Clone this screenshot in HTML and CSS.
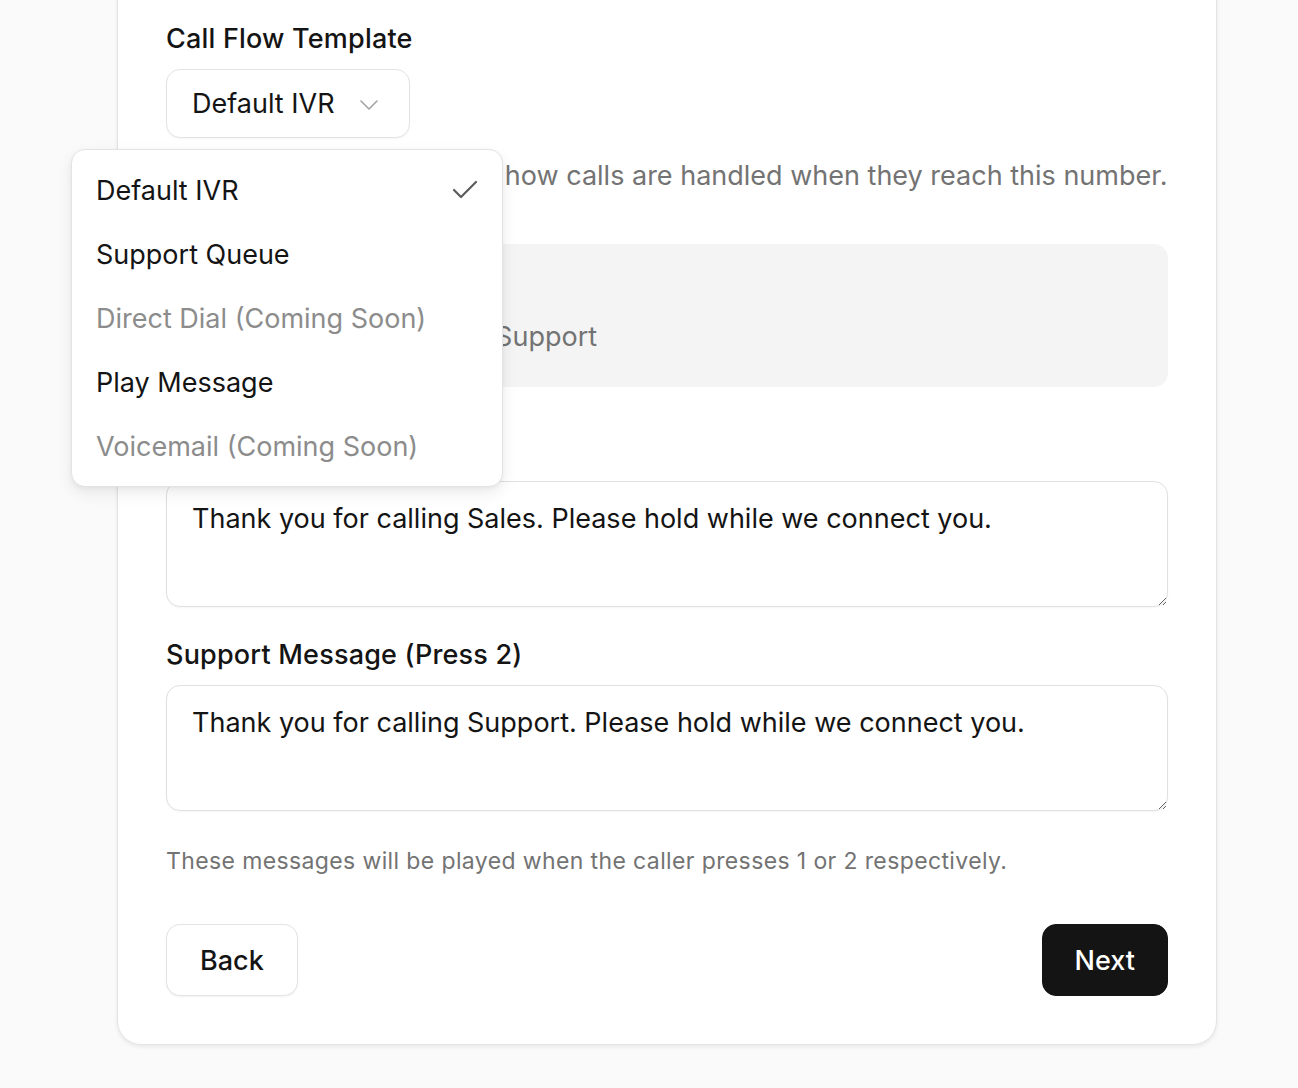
FILE: index.html
```html
<!DOCTYPE html>
<html lang="en">
<head>
<meta charset="utf-8">
<title>Call Flow</title>
<link rel="stylesheet" href="styles.css">
</head>
<body>
<div class="page">
  <div class="card">
    <div class="field">
      <div class="label">Call Flow Template</div>
      <div class="select-wrap">
        <button class="select" type="button">
          <span>Default IVR</span>
          <svg class="chev" width="18" height="10" viewBox="0 0 18 10"><polyline points="1,1 9,9 17,1" fill="none" stroke="#a3a3a3" stroke-width="1.6" stroke-linecap="round" stroke-linejoin="round"/></svg>
        </button>
        <div class="menu">
          <div class="item">Default IVR
            <svg class="check" width="26" height="20" viewBox="0 0 26 20"><polyline points="2,10 9,17 24,2" fill="none" stroke="#5c5c5c" stroke-width="2.2" stroke-linecap="round" stroke-linejoin="round"/></svg>
          </div>
          <div class="item">Support Queue</div>
          <div class="item disabled">Direct Dial (Coming Soon)</div>
          <div class="item">Play Message</div>
          <div class="item disabled">Voicemail (Coming Soon)</div>
        </div>
      </div>
      <p class="desc">Select a template that sets how calls are handled when they reach this number.</p>
    </div>

    <div class="preview">
      <div class="preview-title">IVR Menu</div>
      <div class="preview-text">Press 1 for Sales, 2 for Support</div>
    </div>

    <div class="field">
      <div class="label">Sales Message (Press 1)</div>
      <textarea class="textarea">Thank you for calling Sales. Please hold while we connect you.</textarea>
    </div>

    <div class="field">
      <div class="label">Support Message (Press 2)</div>
      <textarea class="textarea">Thank you for calling Support. Please hold while we connect you.</textarea>
    </div>

    <p class="hint">These messages will be played when the caller presses 1 or 2 respectively.</p>

    <div class="actions">
      <button class="btn btn-outline" type="button">Back</button>
      <button class="btn btn-primary" type="button">Next</button>
    </div>
  </div>
</div>
</body>
</html>
```
FILE: styles.css
```css
* { box-sizing: border-box; }
html, body {
  margin: 0;
  padding: 0;
  background: #fafafa;
  font-family: Inter, "Liberation Sans", sans-serif;
  color: #141414;
}
.page {
  padding-left: 117px;
  height: 1088px;
  overflow: hidden;
}
.card {
  width: 1100px;
  margin-top: -60px;
  background: #fff;
  border: 1px solid #e4e4e4;
  border-radius: 24px;
  box-shadow: 0 2px 4px rgba(0,0,0,0.07);
  padding: 78px 48px 48px;
}
.field {
  display: flex;
  flex-direction: column;
  align-items: flex-start;
}
.label {
  font-size: 27px;
  line-height: 39px;
  font-weight: 500;
  letter-spacing: 0.2px;
  margin-bottom: 11px;
}
.select-wrap {
  position: relative;
}
.select {
  display: flex;
  align-items: center;
  gap: 25px;
  height: 69px;
  padding: 0 31px 0 25px;
  background: #fff;
  border: 1px solid #e3e3e3;
  border-radius: 14px;
  box-shadow: 0 1px 2px rgba(0,0,0,0.04);
  font: inherit;
  font-size: 27px;
  color: #141414;
}
.chev { margin-top: 2px; }
.menu {
  position: absolute;
  left: -95px;
  top: 80px;
  width: 432px;
  padding: 8px 0;
  background: #fff;
  border: 1px solid #e3e3e3;
  border-radius: 14px;
  box-shadow: 0 6px 16px rgba(0,0,0,0.08), 0 2px 4px rgba(0,0,0,0.04);
  z-index: 10;
}
.item {
  display: flex;
  align-items: center;
  justify-content: space-between;
  height: 64px;
  padding: 0 24px;
  font-size: 27px;
  color: #141414;
}
.item.disabled { color: #8c8c8c; }
.desc {
  margin: 18px 0 0;
  text-indent: -6px;
  font-size: 27px;
  line-height: 39px;
  color: #737373;
  white-space: nowrap;
}
.preview {
  margin-top: 49px;
  margin-bottom: 44px;
  height: 143px;
  background: #f4f4f4;
  border-radius: 14px;
  padding: 24px 26px;
}
.preview-title {
  font-size: 27px;
  line-height: 39px;
  font-weight: 500;
}
.preview-text {
  margin-top: 10px;
  text-indent: 11px;
  font-size: 27px;
  line-height: 39px;
  color: #737373;
}
.textarea {
  display: block;
  width: 100%;
  height: 126px;
  padding: 17px 25px;
  border: 1px solid #e0e0e0;
  border-radius: 14px;
  font: inherit;
  font-size: 27px;
  line-height: 39px;
  color: #141414;
  resize: vertical;
  background: #fff;
  box-shadow: 0 1px 2px rgba(0,0,0,0.04);
}
.field + .field { margin-top: 28px; }
.hint {
  margin: 34px 0 0;
  font-size: 23px;
  line-height: 33px;
  color: #737373;
  letter-spacing: 0.38px;
}
.actions {
  display: flex;
  justify-content: space-between;
  margin-top: 46px;
}
.btn {
  height: 72px;
  border-radius: 14px;
  font: inherit;
  font-size: 27px;
  font-weight: 500;
}
.btn-outline {
  padding: 0 33px;
  background: #fff;
  color: #141414;
  border: 1px solid #e3e3e3;
  box-shadow: 0 1px 2px rgba(0,0,0,0.05);
}
.btn-primary {
  padding: 0 32px;
  background: #141414;
  color: #fff;
  border: 1px solid #141414;
}
```
